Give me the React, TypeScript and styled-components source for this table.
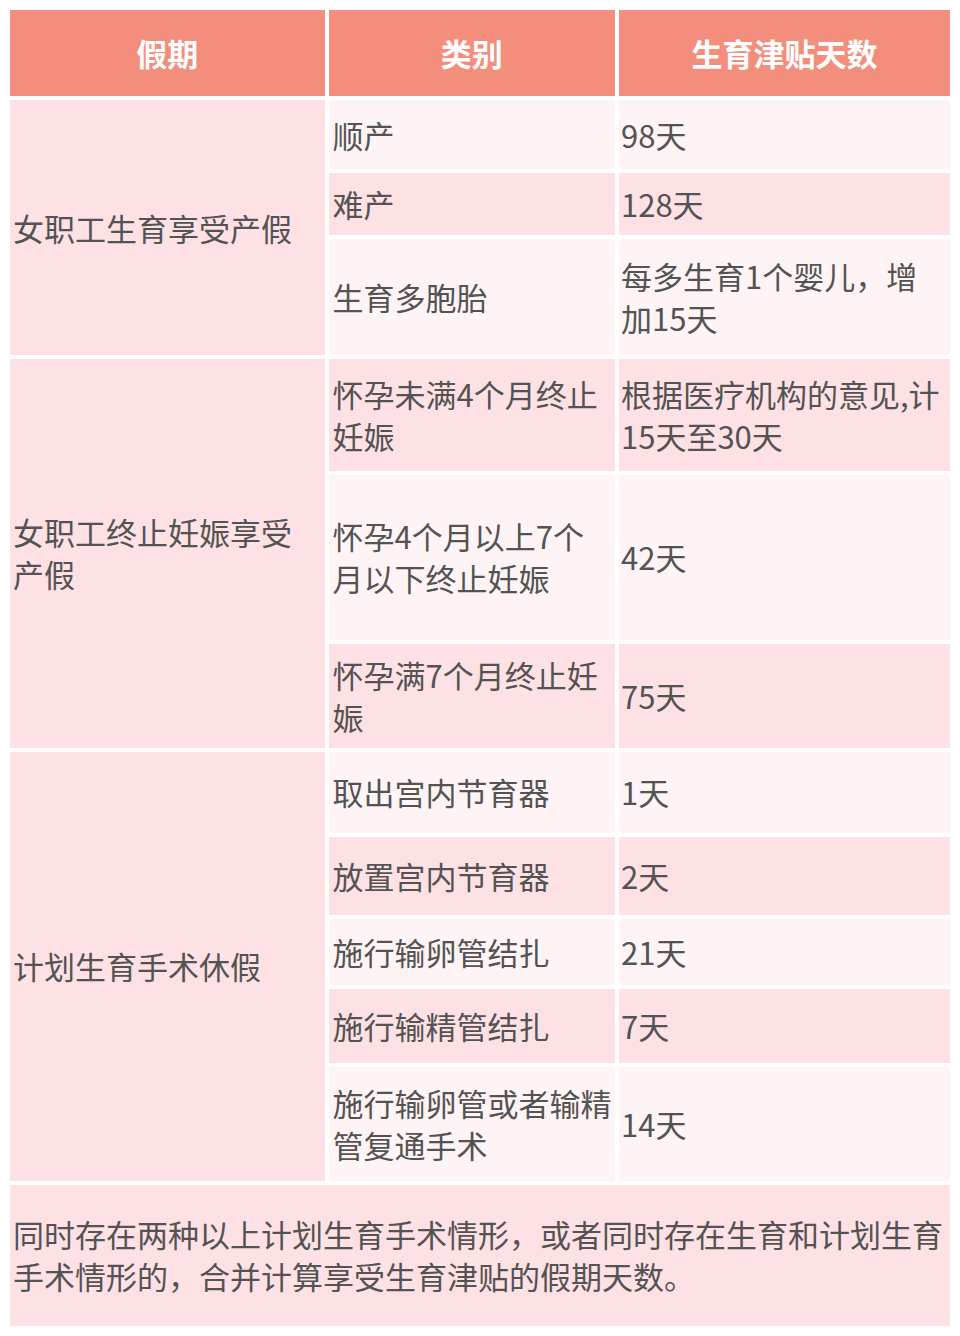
import React from "react";
import styled, { createGlobalStyle } from "styled-components";

const GlobalStyle = createGlobalStyle`
  html, body {
    margin: 0;
    padding: 0;
    background: #ffffff;
  }
  body {
    font-family: "Noto Sans CJK SC", "Noto Sans", sans-serif;
  }
`;

const DARK = "#fee1e5";
const LIGHT = "#fff4f5";

const Page = styled.div`
  padding: 10px;
  width: 940px;
`;

const Table = styled.div`
  display: grid;
  grid-template-columns: 314.5px 286.5px 331px;
  grid-template-rows: 86px 69px 62px 116px 112px 164.5px 104.2px 81.3px 78.3px 66px 74px 113.7px 141px;
  column-gap: 4px;
  row-gap: 4px;
  font-size: 31px;
  line-height: 42px;
  color: #535353;
`;

const HeaderCell = styled.div`
  background: #f48e7c;
  color: #ffffff;
  font-weight: 700;
  display: flex;
  align-items: center;
  justify-content: center;
`;

const Cell = styled.div<{ $tone: "dark" | "light"; $rows?: number; $padLeft?: number; $padRight?: number }>`
  background: ${(p) => (p.$tone === "dark" ? DARK : LIGHT)};
  grid-row: ${(p) => (p.$rows ? `span ${p.$rows}` : "auto")};
  display: flex;
  align-items: center;
  padding: 0 ${(p) => p.$padRight ?? 2}px 0 ${(p) => p.$padLeft ?? 4}px;
`;

const Footer = styled(Cell)`
  grid-column: 1 / -1;
`;

type Item = { kind: string; days: string };
type Group = { name: string; items: Item[] };

const groups: Group[] = [
  {
    name: "女职工生育享受产假",
    items: [
      { kind: "顺产", days: "98天" },
      { kind: "难产", days: "128天" },
      { kind: "生育多胞胎", days: "每多生育1个婴儿，增加15天" },
    ],
  },
  {
    name: "女职工终止妊娠享受产假",
    items: [
      { kind: "怀孕未满4个月终止妊娠", days: "根据医疗机构的意见,计15天至30天" },
      { kind: "怀孕4个月以上7个月以下终止妊娠", days: "42天" },
      { kind: "怀孕满7个月终止妊娠", days: "75天" },
    ],
  },
  {
    name: "计划生育手术休假",
    items: [
      { kind: "取出宫内节育器", days: "1天" },
      { kind: "放置宫内节育器", days: "2天" },
      { kind: "施行输卵管结扎", days: "21天" },
      { kind: "施行输精管结扎", days: "7天" },
      { kind: "施行输卵管或者输精管复通手术", days: "14天" },
    ],
  },
];

const App: React.FC = () => {
  let index = 0;
  return (
    <>
      <GlobalStyle />
      <Page>
        <Table>
          <HeaderCell>假期</HeaderCell>
          <HeaderCell>类别</HeaderCell>
          <HeaderCell>生育津贴天数</HeaderCell>
          {groups.map((group) => (
            <React.Fragment key={group.name}>
              <Cell $tone="dark" $rows={group.items.length} $padLeft={3} $padRight={8}>
                {group.name}
              </Cell>
              {group.items.map((item) => {
                const tone = index++ % 2 === 0 ? "light" : "dark";
                return (
                  <React.Fragment key={item.kind}>
                    <Cell $tone={tone}>{item.kind}</Cell>
                    <Cell $tone={tone} $padLeft={2} $padRight={5}>
                      {item.days}
                    </Cell>
                  </React.Fragment>
                );
              })}
            </React.Fragment>
          ))}
          <Footer $tone="dark" $padLeft={3} $padRight={3}>
            同时存在两种以上计划生育手术情形，或者同时存在生育和计划生育手术情形的，合并计算享受生育津贴的假期天数。
          </Footer>
        </Table>
      </Page>
    </>
  );
};

export default App;
